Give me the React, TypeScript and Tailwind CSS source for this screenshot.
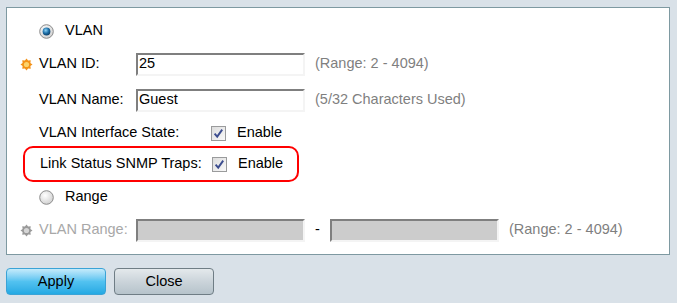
import React from "react";

const font = { fontFamily: '"Liberation Sans", Arial, sans-serif' };

const Burst: React.FC<{ gray?: boolean }> = ({ gray }) => {
  const outer = gray ? "#9a9a9a" : "#f39218";
  const inner = gray ? "#d6d6d6" : "#fcd36c";
  const pts: string[] = [];
  for (let i = 0; i < 16; i++) {
    const r = i % 2 === 0 ? 6 : 4.2;
    const a = (Math.PI * 2 * i) / 16 - Math.PI / 2;
    pts.push(`${6.5 + r * Math.cos(a)},${6.5 + r * Math.sin(a)}`);
  }
  return (
    <svg width="13" height="13" viewBox="0 0 13 13">
      <polygon points={pts.join(" ")} fill={outer} />
      <circle cx="6.5" cy="6.5" r="2.6" fill={inner} />
    </svg>
  );
};

const Radio: React.FC<{ checked?: boolean }> = ({ checked }) => (
  <svg width="15" height="15" viewBox="0 0 15 15">
    <defs>
      <radialGradient id="rbg" cx="0.4" cy="0.35" r="0.7">
        <stop offset="0" stopColor="#ffffff" />
        <stop offset="1" stopColor="#cfcfcf" />
      </radialGradient>
      <radialGradient id="rdot" cx="0.4" cy="0.35" r="0.7">
        <stop offset="0" stopColor="#8fd4f6" />
        <stop offset="0.55" stopColor="#1d6fa8" />
        <stop offset="1" stopColor="#0c3a60" />
      </radialGradient>
    </defs>
    <circle cx="7.5" cy="7.5" r="6.8" fill="url(#rbg)" stroke="#8c8c8c" strokeWidth="1" />
    {checked && <circle cx="7.5" cy="7.5" r="3.9" fill="url(#rdot)" />}
  </svg>
);

const Check: React.FC = () => (
  <svg width="15" height="15" viewBox="0 0 15 15">
    <defs>
      <linearGradient id="cbg" x1="0" y1="0" x2="1" y2="1">
        <stop offset="0" stopColor="#dcdcdc" />
        <stop offset="1" stopColor="#fafafa" />
      </linearGradient>
    </defs>
    <rect x="0.5" y="0.5" width="14" height="14" fill="url(#cbg)" stroke="#9a9b9c" />
    <path d="M3.6 7.6 L6.2 10.6 L11.2 3.6" fill="none" stroke="#3c4d8f" strokeWidth="1.9" />
  </svg>
);

const TextBox: React.FC<{ value?: string; disabled?: boolean }> = ({ value, disabled }) => (
  <div
    className={`w-[169px] h-[23px] border-2 border-t-[#7f7f7f] border-l-[#7f7f7f] border-r-[#f4f4f4] border-b-[#f4f4f4] flex items-center pl-[1px] text-black ${
      disabled ? "bg-[#cccccc]" : "bg-white"
    }`}
  >
    {value}
  </div>
);

const App: React.FC = () => {
  return (
    <div className="w-[677px] h-[303px] bg-[#d9e1e8] pt-[7px] pl-[6px]" style={font}>
      <div className="w-[664px] h-[248px] bg-white border border-[#7e99a1] pt-[8px] text-[14.5px] text-black">
        <div className="h-[30px] flex items-center pl-[32px]">
          <Radio checked />
          <span className="ml-[11px]">VLAN</span>
        </div>
        <div className="h-[36px] flex items-center pl-[13px]">
          <Burst />
          <span className="ml-[6px] w-[97px]">VLAN ID:</span>
          <TextBox value="25" />
          <span className="ml-[10px] text-[#7f7f7f]">(Range: 2 - 4094)</span>
        </div>
        <div className="h-[36px] flex items-center pl-[32px]">
          <span className="w-[97px]">VLAN Name:</span>
          <TextBox value="Guest" />
          <span className="ml-[10px] text-[#7f7f7f]">(5/32 Characters Used)</span>
        </div>
        <div className="h-[30px] flex items-center pl-[32px]">
          <span className="w-[172px]">VLAN Interface State:</span>
          <Check />
          <span className="ml-[11px]">Enable</span>
        </div>
        <div className="h-[36px] -my-[2px] ml-[16px] w-[276px] border-2 border-[#ff0000] rounded-[10px] flex items-center pl-[15px]">
          <span className="w-[172px]">Link Status SNMP Traps:</span>
          <Check />
          <span className="ml-[11px]">Enable</span>
        </div>
        <div className="h-[34px] flex items-center pl-[32px]">
          <Radio />
          <span className="ml-[11px]">Range</span>
        </div>
        <div className="h-[32px] flex items-center pl-[13px] text-[#a8a8a8]">
          <Burst gray />
          <span className="ml-[6px] w-[97px]">VLAN Range:</span>
          <TextBox disabled />
          <span className="w-[25px] text-center text-black">-</span>
          <TextBox disabled />
          <span className="ml-[10px] text-[#7f7f7f]">(Range: 2 - 4094)</span>
        </div>
      </div>
      <div className="flex gap-[8px] mt-[13px]">
        <button className="w-[100px] h-[27px] rounded-[4px] border border-[#3aa3d6] bg-gradient-to-b from-[#c4ebfb] via-[#52c2f0] to-[#22a9e3] text-[14.5px] text-black">
          Apply
        </button>
        <button className="w-[100px] h-[27px] rounded-[4px] border border-[#6f7d85] bg-gradient-to-b from-[#e4e9ec] via-[#cbd4da] to-[#b6c3cb] text-[14.5px] text-black">
          Close
        </button>
      </div>
    </div>
  );
};

export default App;
